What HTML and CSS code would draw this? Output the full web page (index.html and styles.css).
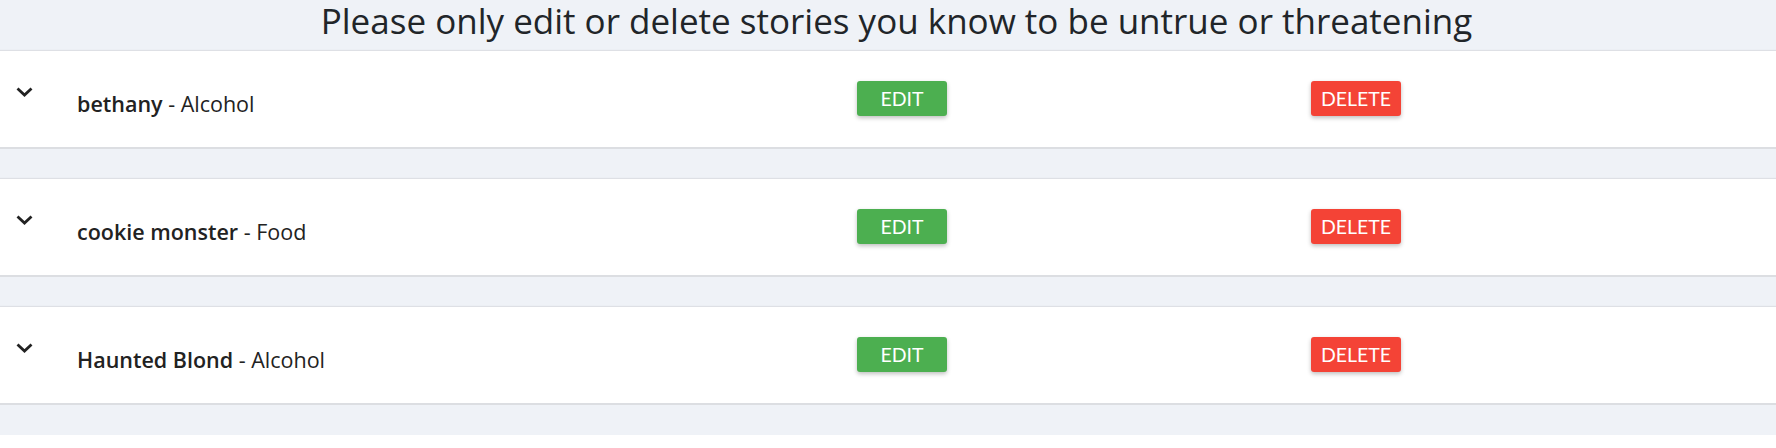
FILE: index.html
```html
<!DOCTYPE html>
<html>
<head>
<meta charset="utf-8">
<link rel="stylesheet" href="styles.css">
</head>
<body>
<div class="page">
  <h1 class="title">Please only edit or delete stories you know to be untrue or threatening</h1>
  <div class="list">
    <div class="card">
      <span class="chev"><svg width="17" height="10" viewBox="0 0 17 10"><path d="M1.5 1.5 L8.5 8 L15.5 1.5" fill="none" stroke="#222" stroke-width="2.8"/></svg></span>
      <span class="name"><b>bethany</b> - Alcohol</span>
      <span class="cell"><button class="btn edit">EDIT</button></span>
      <span class="cell"><button class="btn del">DELETE</button></span>
    </div>
    <div class="card">
      <span class="chev"><svg width="17" height="10" viewBox="0 0 17 10"><path d="M1.5 1.5 L8.5 8 L15.5 1.5" fill="none" stroke="#222" stroke-width="2.8"/></svg></span>
      <span class="name"><b>cookie monster</b> - Food</span>
      <span class="cell"><button class="btn edit">EDIT</button></span>
      <span class="cell"><button class="btn del">DELETE</button></span>
    </div>
    <div class="card">
      <span class="chev"><svg width="17" height="10" viewBox="0 0 17 10"><path d="M1.5 1.5 L8.5 8 L15.5 1.5" fill="none" stroke="#222" stroke-width="2.8"/></svg></span>
      <span class="name"><b>Haunted Blond</b> - Alcohol</span>
      <span class="cell"><button class="btn edit">EDIT</button></span>
      <span class="cell"><button class="btn del">DELETE</button></span>
    </div>
  </div>
</div>
</body>
</html>
```
FILE: styles.css
```css
html, body {
  margin: 0;
  padding: 0;
  background: #ffffff;
}
.page {
  background: #eff2f7;
  padding-bottom: 30px;
  font-family: "Open Sans", "Noto Sans", sans-serif;
  color: #212529;
}
.title {
  margin: 0;
  height: 51px;
  padding-left: 17px;
  text-align: center;
  font-weight: 400;
  font-size: 35px;
  line-height: 42px;
  letter-spacing: 0;
}
.list {
  display: flex;
  flex-direction: column;
  gap: 30px;
}
.card {
  background: #fff;
  height: 96px;
  border-bottom: 2px solid #dcdee2;
  box-shadow: 0 -1px 1px rgba(0,0,0,0.07);
  display: grid;
  grid-template-columns: 61px 780px 454px 1fr;
  align-items: center;
  padding-left: 16px;
}
.chev {
  display: flex;
  align-self: start;
  padding-top: 36px;
}
.name {
  font-size: 21.5px;
  padding-top: 8px;
  color: #222;
}
.name b {
  font-weight: 600;
}
.cell {
  display: flex;
  padding-bottom: 1px;
}
.btn {
  width: 90px;
  height: 35px;
  border: none;
  border-radius: 3px;
  color: #fff;
  font-family: Lato, sans-serif;
  font-size: 19.5px;
  padding: 0;
  box-shadow: 0 2px 4px rgba(0,0,0,0.25);
}
.edit { background: #4caf50; }
.del { background: #f44336; }
```
